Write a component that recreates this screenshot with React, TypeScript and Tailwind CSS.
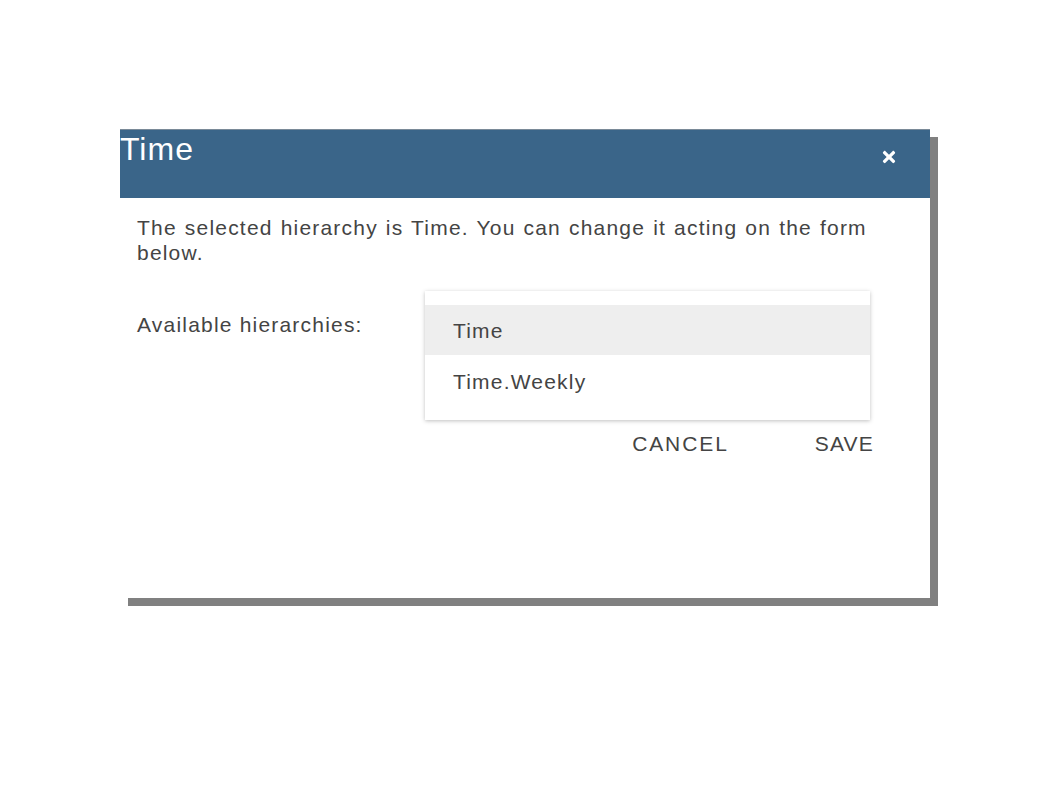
import React from 'react'
import { FaTimes } from 'react-icons/fa'

function HierarchyDialog() {
  return (
    <div className="ml-[120px] mt-[129px] w-[810px] h-[469px] bg-white shadow-[8px_8px_0_#808080] flex flex-col">
      <div className="h-[69px] bg-[#3a6589] border-t border-[#7a8a98] flex justify-between">
        <h1 className="text-[32px] leading-[38px] tracking-[1px] text-white">Time</h1>
        <button className="mt-[18px] mr-[32px] h-[18px] text-white">
          <FaTimes size={18} />
        </button>
      </div>

      <div className="px-[17px] pt-[17px] text-[#444] text-[21px] leading-[25px] tracking-[1.2px]">
        <p className="pr-[30px] [word-spacing:1px]">The selected hierarchy is Time. You can change it acting on the form below.</p>

        <div className="flex mt-[26px]">
          <div className="w-[288px] pt-[21px]">Available hierarchies:</div>
          <div className="w-[445px]">
            <div className="bg-white shadow-[0_1px_4px_rgba(0,0,0,0.25)] pt-[14px] pb-[13px]">
              <div className="h-[50px] bg-[#eeeeee] px-[28px] flex items-center">Time</div>
              <div className="h-[52px] px-[28px] flex items-center">Time.Weekly</div>
            </div>
            <div className="flex justify-end gap-[86px] mt-[11px] -mr-[4px]">
              <button className="uppercase tracking-[1.9px]">Cancel</button>
              <button className="uppercase">Save</button>
            </div>
          </div>
        </div>
      </div>
    </div>
  )
}

export default function App() {
  return (
    <div className="w-[1058px] h-[794px] bg-white overflow-hidden [font-family:'Liberation_Sans',Arial,sans-serif]">
      <HierarchyDialog />
    </div>
  )
}
